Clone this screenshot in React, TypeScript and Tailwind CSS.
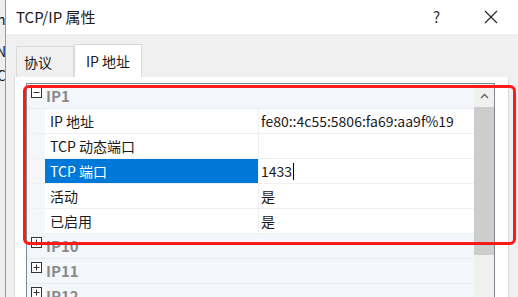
import React from 'react'

const font = { fontFamily: '"Noto Sans CJK SC", "Noto Sans", sans-serif' }

function BoxIcon({ open }: { open: boolean }) {
  return (
    <svg width="11" height="11" viewBox="0 0 11 11" className="shrink-0">
      <rect x="0.5" y="0.5" width="10" height="10" fill="white" stroke="#333" />
      <path d="M2.5 5.5h6" stroke="#333" />
      {!open && <path d="M5.5 2.5v6" stroke="#333" />}
    </svg>
  )
}

const props = [
  { name: 'IP 地址', value: 'fe80::4c55:5806:fa69:aa9f%19' },
  { name: 'TCP 动态端口', value: '' },
  { name: 'TCP 端口', value: '1433', selected: true },
  { name: '活动', value: '是' },
  { name: '已启用', value: '是' },
]

function Category({ label, open }: { label: string; open: boolean }) {
  return (
    <div className="flex h-[25px] shrink-0 items-center bg-[#f3f6fb] border-b border-[#e8ecf2]">
      <div className="w-[18px] flex justify-center pb-[8px]">
        <BoxIcon open={open} />
      </div>
      <span className="pl-[1px] text-[15px] font-bold text-[#8a8a8a]">{label}</span>
    </div>
  )
}

export default function App() {
  return (
    <div className="relative flex h-[297px] w-[518px] overflow-hidden bg-[#f0f0f0] text-[#1a1a1a]" style={font}>
      {/* window behind */}
      <div className="relative w-[6px] shrink-0 overflow-hidden border-r border-[#9a9a9a] bg-[#eeeeee] text-[14px] leading-none">
        <span className="absolute left-[-3px] top-[12px]">h</span>
        <span className="absolute left-[-4px] top-[44px]">N</span>
        <span className="absolute left-[-3px] top-[68px]">C</span>
      </div>

      <div className="flex flex-1 flex-col">
        {/* title bar */}
        <div className="flex h-[34px] shrink-0 items-center bg-white pl-[10px]">
          <span className="text-[15px]">TCP/IP 属性</span>
          <span className="ml-auto mr-[44px] text-[15px] text-[#333]">?</span>
          <svg width="14" height="14" viewBox="0 0 14 14" className="mr-[20px]">
            <path d="M1 1l12 12M13 1L1 13" stroke="#222" strokeWidth="1.1" />
          </svg>
        </div>

        {/* body */}
        <div className="flex flex-1 shrink-0 flex-col pl-[8px] pt-[10px]">
          <div className="flex shrink-0 items-end pl-[2px]">
            <div className="flex h-[31px] w-[58px] items-center border border-b-0 border-[#d9d9d9] bg-[#f0f0f0] pl-[7px] text-[14px]">
              协议
            </div>
            <div className="flex h-[33px] w-[68px] items-center justify-center border border-b-0 border-[#d9d9d9] bg-white text-[14px]">
              IP 地址
            </div>
          </div>

          <div className="flex-1 shrink-0 w-[495px] border-l border-r border-[#d9d9d9] bg-white pl-[11px] pt-[6px]">
            <div className="flex h-[230px] w-[469px] border border-[#828790] bg-white">
              <div className="flex flex-1 flex-col text-[14px]">
                <Category label="IP1" open />
                {props.map((p) => (
                  <div key={p.name} className="flex h-[25px] shrink-0 border-b border-[#f0f0f0]">
                    <div className="w-[18px] bg-[#f3f6fb]" />
                    <div
                      className={
                        p.selected
                          ? 'flex w-[213px] items-center bg-[#0078d7] pl-[5px] text-white'
                          : 'flex w-[213px] items-center pl-[5px]'
                      }
                    >
                      {p.name}
                    </div>
                    <div className="flex flex-1 items-center border-l border-[#f0f0f0] pl-[2px]">
                      {p.value}
                      {p.selected && <span className="ml-[1px] inline-block h-[17px] w-px bg-black" />}
                    </div>
                  </div>
                ))}
                <Category label="IP10" open={false} />
                <Category label="IP11" open={false} />
                <Category label="IP12" open={false} />
              </div>

              {/* scrollbar */}
              <div className="flex w-[20px] shrink-0 flex-col bg-[#f0f0f0]">
                <div className="flex h-[23px] shrink-0 items-center justify-center">
                  <svg width="9" height="6" viewBox="0 0 9 6">
                    <path d="M1 5l3.5-3.5L8 5" fill="none" stroke="#606060" strokeWidth="1.3" />
                  </svg>
                </div>
                <div className="h-[148px] shrink-0 bg-[#cdcdcd]" />
              </div>
            </div>
          </div>
        </div>
      </div>

      {/* red highlight */}
      <div className="absolute left-[23px] top-[85px] h-[160px] w-[493px] rounded-[6px] border-[3.5px] border-[#ff1a1a]" />
    </div>
  )
}
